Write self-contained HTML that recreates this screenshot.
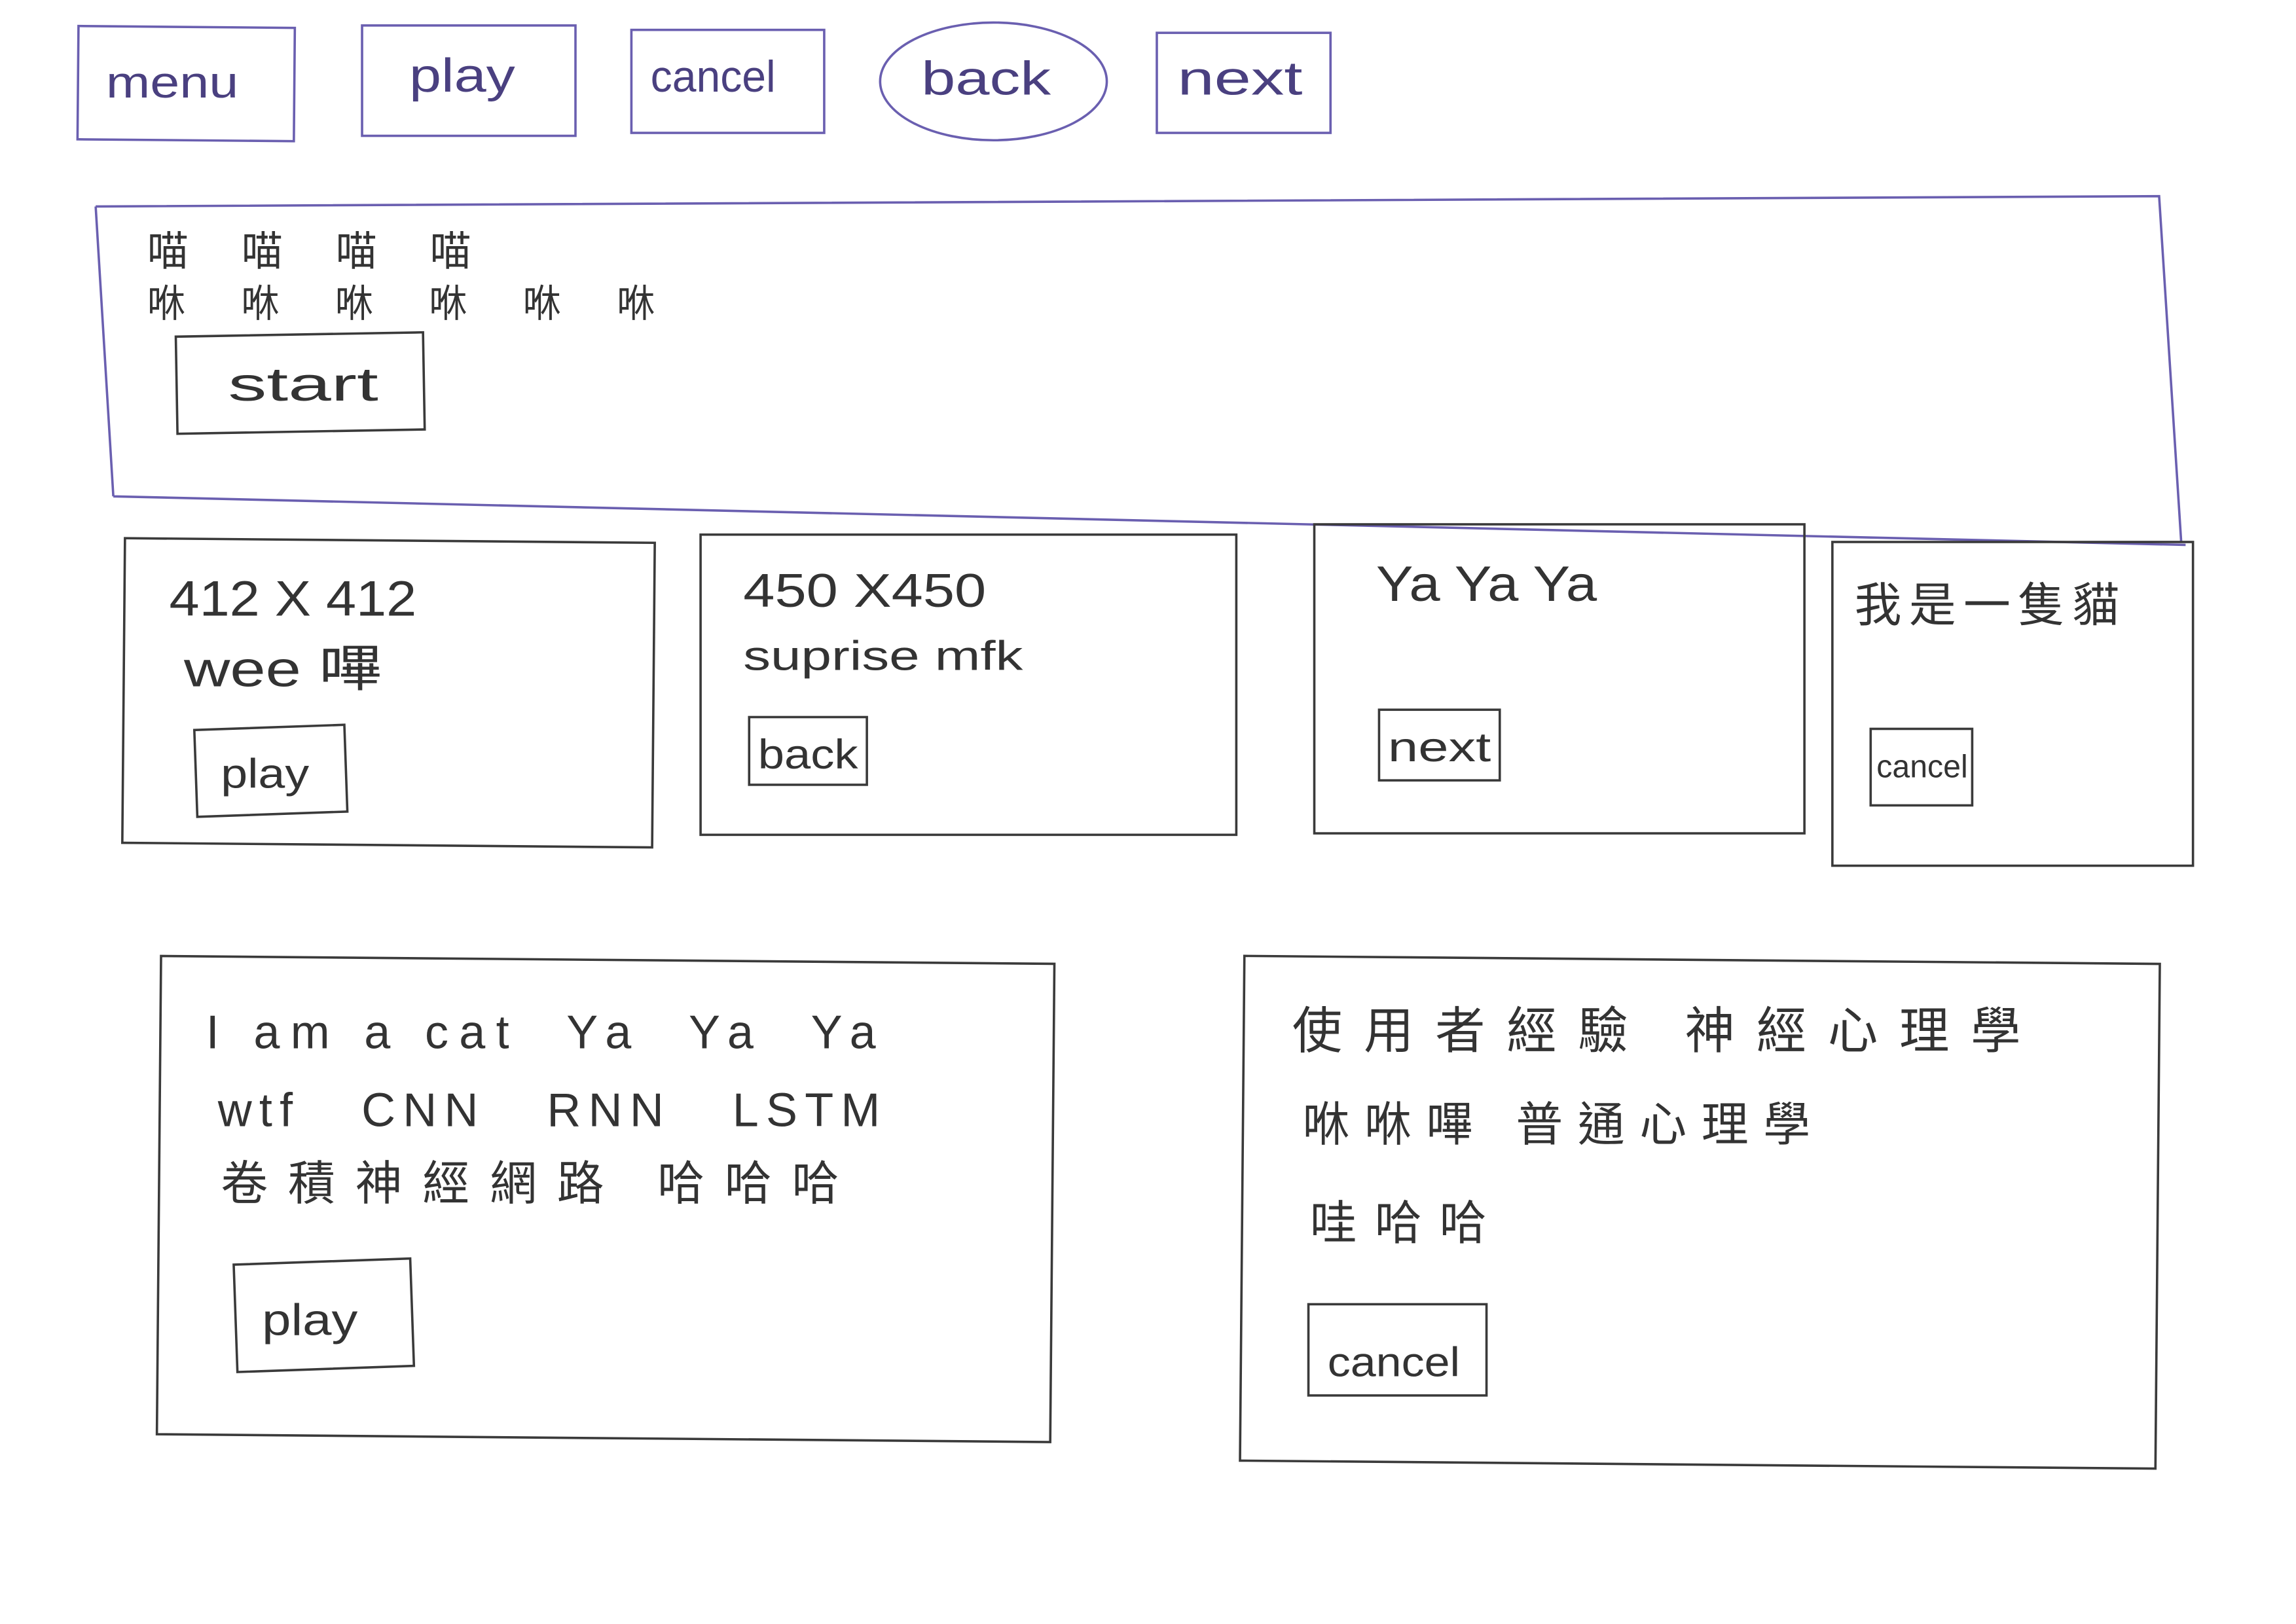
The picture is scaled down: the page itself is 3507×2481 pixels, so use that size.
<!DOCTYPE html>
<html><head><meta charset="utf-8">
<style>
html,body{margin:0;padding:0;background:#fff;}
svg{display:block;}
text{font-family:"Liberation Sans","Noto Sans CJK TC",sans-serif;fill:#333;}
.k{fill:none;stroke:#3a3a3a;stroke-width:1.6;}
.p{fill:none;stroke:#6a5fb0;stroke-width:1.6;}
.pt{fill:#4a4080;}
</style></head>
<body>
<svg width="3507" height="2481" viewBox="0 0 1560 1103" xmlns="http://www.w3.org/2000/svg">
<rect width="1560" height="1103" fill="#fff"/>
<rect class="p" x="53" y="18" width="147" height="77" transform="rotate(0.5 126 56)"/>
<text class="pt" x="72" y="66" font-size="30" textLength="90" lengthAdjust="spacingAndGlyphs">menu</text>
<rect class="p" x="246" y="17" width="145" height="75"/>
<text class="pt" x="278" y="62" font-size="32" textLength="72" lengthAdjust="spacingAndGlyphs">play</text>
<rect class="p" x="429" y="20" width="131" height="70"/>
<text class="pt" x="442" y="62" font-size="30" textLength="85" lengthAdjust="spacingAndGlyphs">cancel</text>
<ellipse class="p" cx="675" cy="55" rx="77" ry="40"/>
<text class="pt" x="626" y="64" font-size="32" textLength="88" lengthAdjust="spacingAndGlyphs">back</text>
<rect class="p" x="786" y="22" width="118" height="68"/>
<text class="pt" x="800" y="64" font-size="32" textLength="85" lengthAdjust="spacingAndGlyphs">next</text>

<path class="p" d="M65 140 L1467 133 L1482 368 M77 337 L1485 370 M65 140 L77 337"/>
<text x="100" y="180" font-size="28" textLength="220" lengthAdjust="spacing">喵喵喵喵</text>
<text x="100" y="215" font-size="26" textLength="345" lengthAdjust="spacing">咻咻咻咻咻咻</text>
<rect class="k" x="120" y="227" width="168" height="66" transform="rotate(-1 204 260)"/>
<text x="155" y="272" font-size="32" textLength="102" lengthAdjust="spacingAndGlyphs">start</text>

<rect class="k" x="84" y="367" width="360" height="207" transform="rotate(0.5 264 470)"/>
<text x="115" y="418" font-size="34" textLength="168" lengthAdjust="spacingAndGlyphs">412 X 412</text>
<text x="125" y="466" font-size="34" textLength="135" lengthAdjust="spacingAndGlyphs">wee 嗶</text>
<rect class="k" x="133" y="494" width="102" height="59" transform="rotate(-2 184 523)"/>
<text x="150" y="535" font-size="28" textLength="60" lengthAdjust="spacingAndGlyphs">play</text>

<rect class="k" x="476" y="363" width="364" height="204"/>
<text x="505" y="412" font-size="32" textLength="165" lengthAdjust="spacingAndGlyphs">450 X450</text>
<text x="505" y="455" font-size="28" textLength="190" lengthAdjust="spacingAndGlyphs">suprise mfk</text>
<rect class="k" x="509" y="487" width="80" height="46"/>
<text x="515" y="522" font-size="28" textLength="68" lengthAdjust="spacingAndGlyphs">back</text>

<rect class="k" x="893" y="356" width="333" height="210"/>
<text x="935" y="408" font-size="34" textLength="150" lengthAdjust="spacingAndGlyphs">Ya Ya Ya</text>
<rect class="k" x="937" y="482" width="82" height="48"/>
<text x="943" y="517" font-size="28" textLength="70" lengthAdjust="spacingAndGlyphs">next</text>

<rect class="k" x="1245" y="368" width="245" height="220"/>
<text x="1260" y="422" font-size="32" textLength="180" lengthAdjust="spacing">我是一隻貓</text>
<rect class="k" x="1271" y="495" width="69" height="52"/>
<text x="1275" y="528" font-size="22" textLength="62" lengthAdjust="spacingAndGlyphs">cancel</text>

<rect class="k" x="108" y="652" width="607" height="325" transform="rotate(0.5 411 814)"/>
<text x="140" y="712" font-size="32" xml:space="preserve" textLength="455" lengthAdjust="spacing">I am a cat  Ya  Ya  Ya</text>
<text x="148" y="765" font-size="32" xml:space="preserve" textLength="450" lengthAdjust="spacing">wtf   CNN   RNN   LSTM</text>
<text x="150" y="815" font-size="32" textLength="420" lengthAdjust="spacing">卷積神經網路 哈哈哈</text>
<rect class="k" x="160" y="857" width="120" height="73" transform="rotate(-2 220 893)"/>
<text x="178" y="907" font-size="30" textLength="65" lengthAdjust="spacingAndGlyphs">play</text>

<rect class="k" x="844" y="652" width="622" height="343" transform="rotate(0.5 1155 823)"/>
<text x="878" y="712" font-size="34" textLength="495" lengthAdjust="spacing">使用者經驗  神經心理學</text>
<text x="885" y="775" font-size="32" textLength="345" lengthAdjust="spacing">咻咻嗶 普通心理學</text>
<text x="890" y="842" font-size="32" textLength="120" lengthAdjust="spacing">哇哈哈</text>
<rect class="k" x="889" y="886" width="121" height="62"/>
<text x="902" y="935" font-size="28" textLength="90" lengthAdjust="spacingAndGlyphs">cancel</text>
</svg>
</body></html>
